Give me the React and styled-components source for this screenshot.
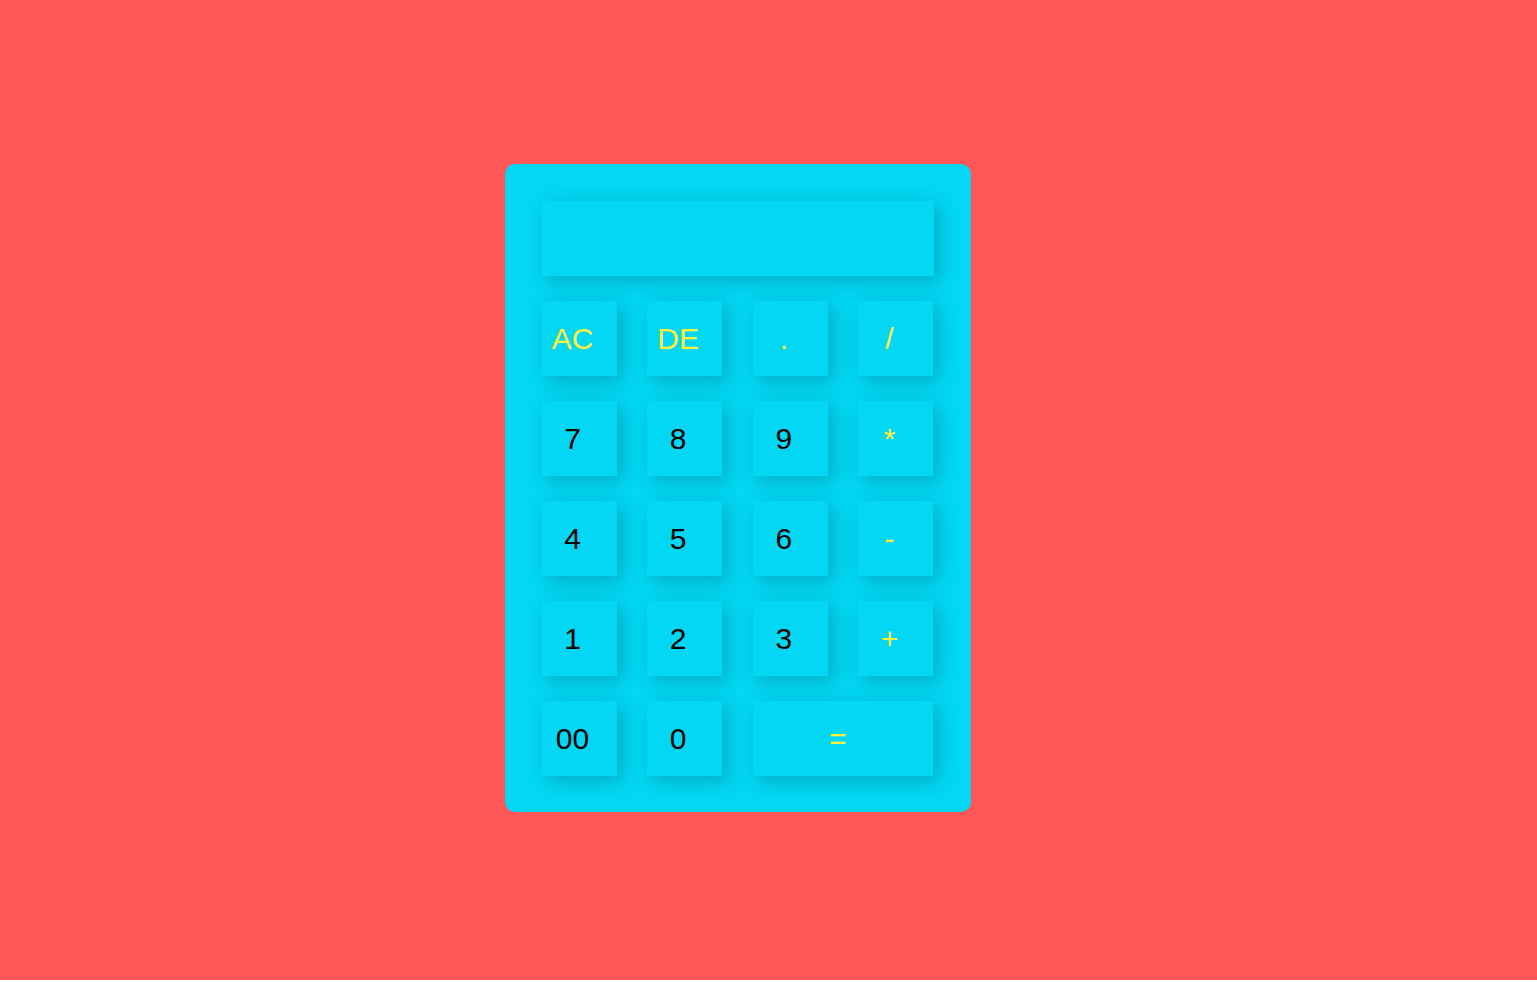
import styled, { createGlobalStyle } from "styled-components";

const Global = createGlobalStyle`
    body {
        margin: 0;
        background: #ffffff;
        font-family: "Liberation Sans", Arial, sans-serif;
    }
`
const Page = styled.div`
    height: 980px;
    background: #ff5757;
    display: flex;
    align-items: center;
    justify-content: center;
    padding-right: 62px;
    padding-bottom: 4px;
    box-sizing: border-box;
`
const Calc = styled.div`
    width: 466px;
    box-sizing: border-box;
    padding: 37px 37px 36px;
    background: #03d7f3;
    border-radius: 10px;
`
const Display = styled.div`
    height: 75px;
    background: #03d7f3;
    box-shadow: 5px 5px 18px rgba(0, 40, 60, 0.25);
    margin-bottom: 25px;
`
const Keys = styled.div`
    display: grid;
    grid-template-columns: repeat(4, 75px);
    grid-auto-rows: 75px;
    column-gap: 30.67px;
    row-gap: 25px;
`
const Key = styled.button`
    border: none;
    margin: 0;
    padding: 0 13px 0 0;
    background: #03d7f3;
    box-shadow: 5px 5px 18px rgba(0, 40, 60, 0.25);
    font-family: "Liberation Sans", Arial, sans-serif;
    font-size: 30px;
    color: ${p => (p.$op ? "#fff23a" : "#000000")};
    grid-column: ${p => (p.$wide ? "span 2" : "auto")};
    padding-right: ${p => (p.$wide ? "11px" : "13px")};
    cursor: pointer;
`

const keys = [
    ["AC", true], ["DE", true], [".", true], ["/", true],
    ["7"], ["8"], ["9"], ["*", true],
    ["4"], ["5"], ["6"], ["-", true],
    ["1"], ["2"], ["3"], ["+", true],
    ["00"], ["0"],
]

function App() {
    return (
        <>
            <Global />
            <Page>
                <Calc>
                    <Display />
                    <Keys>
                        {keys.map(([k, op]) => (
                            <Key key={k} $op={op}>{k}</Key>
                        ))}
                        <Key $op $wide>=</Key>
                    </Keys>
                </Calc>
            </Page>
        </>
    );
}

export default App
